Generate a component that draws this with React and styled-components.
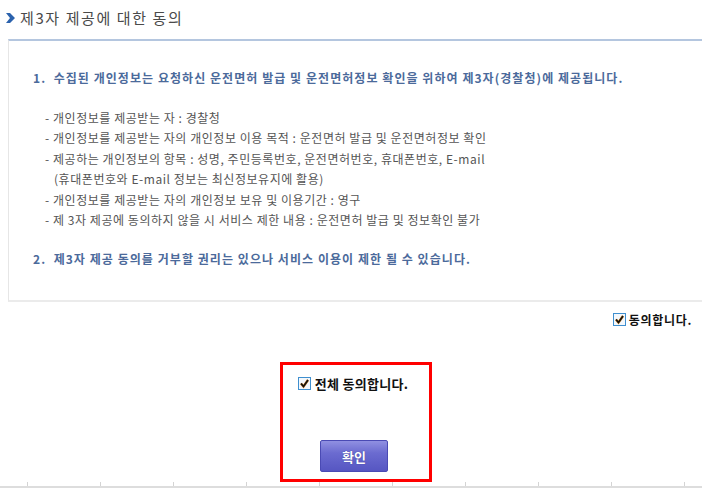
import React from 'react';
import styled, { createGlobalStyle } from 'styled-components';

const GlobalStyle = createGlobalStyle`
  html, body {
    margin: 0;
    padding: 0;
    background: #ffffff;
  }
  body {
    font-family: "Noto Sans CJK KR", "Noto Sans", sans-serif;
    overflow: hidden;
  }
`;

const Page = styled.div`
  width: 702px;
  display: flex;
  flex-direction: column;
  overflow: hidden;

  & > * {
    flex-shrink: 0;
  }
`;

const TitleRow = styled.div`
  height: 39px;
  display: flex;
  align-items: center;
  gap: 5px;
  padding-left: 6px;
  padding-bottom: 4px;
  box-sizing: border-box;
`;

const Title = styled.h2`
  margin: 0;
  font-size: 15px;
  line-height: 20px;
  font-weight: normal;
  color: #4a4a4a;
  letter-spacing: 1.6px;
`;

const Box = styled.div`
  margin-left: 8px;
  border-top: 2px solid #b4c6df;
  border-left: 1px solid #e6e6e6;
  border-bottom: 2px solid #ebebeb;
  padding: 27px 0 31px 24px;
  display: flex;
  flex-direction: column;
`;

const Heading = styled.p`
  margin: 0;
  font-size: 12px;
  line-height: 20px;
  font-weight: bold;
  color: #4b6a9b;
  letter-spacing: 1.05px;
  white-space: pre;
`;

const List = styled.ul`
  list-style: none;
  margin: 20px 0 19px 0;
  padding: 0 0 0 12px;
`;

const Item = styled.li`
  font-size: 12px;
  line-height: 20.4px;
  color: #555555;
  letter-spacing: 0.55px;
  white-space: pre;
  padding-left: ${p => (p.$indent ? '9px' : '0')};
`;

const AgreeRow = styled.div`
  display: flex;
  justify-content: flex-end;
  align-items: center;
  gap: 3px;
  padding-right: 10px;
  margin-top: 9px;
  height: 17px;
`;

const AgreeText = styled.span`
  font-size: 12px;
  font-weight: bold;
  color: #111111;
  letter-spacing: 0.7px;
`;

const ConfirmPanel = styled.div`
  margin: 34px 0 0 280px;
  width: 152px;
  height: 120px;
  box-sizing: border-box;
  border: 3px solid #ff0000;
  display: flex;
  flex-direction: column;
  align-items: center;
  padding-top: 9px;
`;

const AllAgree = styled.label`
  display: flex;
  align-items: center;
  gap: 4px;
  margin-left: -6px;
  height: 18px;
  font-size: 13px;
  font-weight: bold;
  color: #111111;
  letter-spacing: 0.3px;
`;

const Button = styled.button`
  margin-top: 48px;
  margin-left: -4px;
  width: 68px;
  height: 32px;
  border: 1px solid #4a4ab4;
  border-radius: 2px;
  background: linear-gradient(#9090e2 0%, #6b6bd0 40%, #5656c2 100%);
  color: #ffffff;
  font-family: "Noto Sans CJK KR", sans-serif;
  font-size: 13px;
  font-weight: bold;
  text-shadow: 0 0 1px #333388;
  cursor: pointer;
`;

const Ruler = styled.div`
  display: flex;
  padding-left: 27px;
  height: 4px;
  overflow: hidden;
  border-bottom: 2px solid #dddddd;
`;

const Tick = styled.div`
  flex: 0 0 72px;
  border-left: 1px solid #d4d4d4;

  &:last-child {
    flex: 1 1 0;
    min-width: 0;
  }
`;

const Arrow = () => (
  <svg width="9" height="10" viewBox="0 0 9 10">
    <polygon points="0,0 4,0 9,5 4,10 0,10 4,5" fill="#2b62ad" />
  </svg>
);

const CheckBox = () => (
  <svg width="13" height="13" viewBox="0 0 13 13">
    <rect x="0.5" y="0.5" width="12" height="12" fill="#f4f8fc" stroke="#3f8fcf" />
    <path d="M3 6.5 L5.5 9.5 L10 3" fill="none" stroke="#c87a1a" strokeWidth="2.4" />
    <path d="M3 6.5 L5.5 9.5 L10 3" fill="none" stroke="#111111" strokeWidth="1.6" />
  </svg>
);

const items = [
  '- 개인정보를 제공받는 자 : 경찰청',
  '- 개인정보를 제공받는 자의 개인정보 이용 목적 : 운전면허 발급 및 운전면허정보 확인',
  '- 제공하는 개인정보의 항목 : 성명, 주민등록번호, 운전면허번호, 휴대폰번호, E-mail',
  '(휴대폰번호와 E-mail 정보는 최신정보유지에 활용)',
  '- 개인정보를 제공받는 자의 개인정보 보유 및 이용기간 : 영구',
  '- 제 3자 제공에 동의하지 않을 시 서비스 제한 내용 : 운전면허 발급 및 정보확인 불가',
];

export default function App() {
  return (
    <Page>
      <GlobalStyle />
      <TitleRow>
        <Arrow />
        <Title>제3자 제공에 대한 동의</Title>
      </TitleRow>
      <Box>
        <Heading>1.  수집된 개인정보는 요청하신 운전면허 발급 및 운전면허정보 확인을 위하여 제3자(경찰청)에 제공됩니다.</Heading>
        <List>
          {items.map((t, i) => (
            <Item key={i} $indent={t.startsWith('(')}>{t}</Item>
          ))}
        </List>
        <Heading>2.  제3자 제공 동의를 거부할 권리는 있으나 서비스 이용이 제한 될 수 있습니다.</Heading>
      </Box>
      <AgreeRow>
        <CheckBox />
        <AgreeText>동의합니다.</AgreeText>
      </AgreeRow>
      <ConfirmPanel>
        <AllAgree>
          <CheckBox />
          전체 동의합니다.
        </AllAgree>
        <Button>확인</Button>
      </ConfirmPanel>
      <Ruler>
        {Array.from({ length: 10 }).map((_, i) => (
          <Tick key={i} />
        ))}
      </Ruler>
    </Page>
  );
}
